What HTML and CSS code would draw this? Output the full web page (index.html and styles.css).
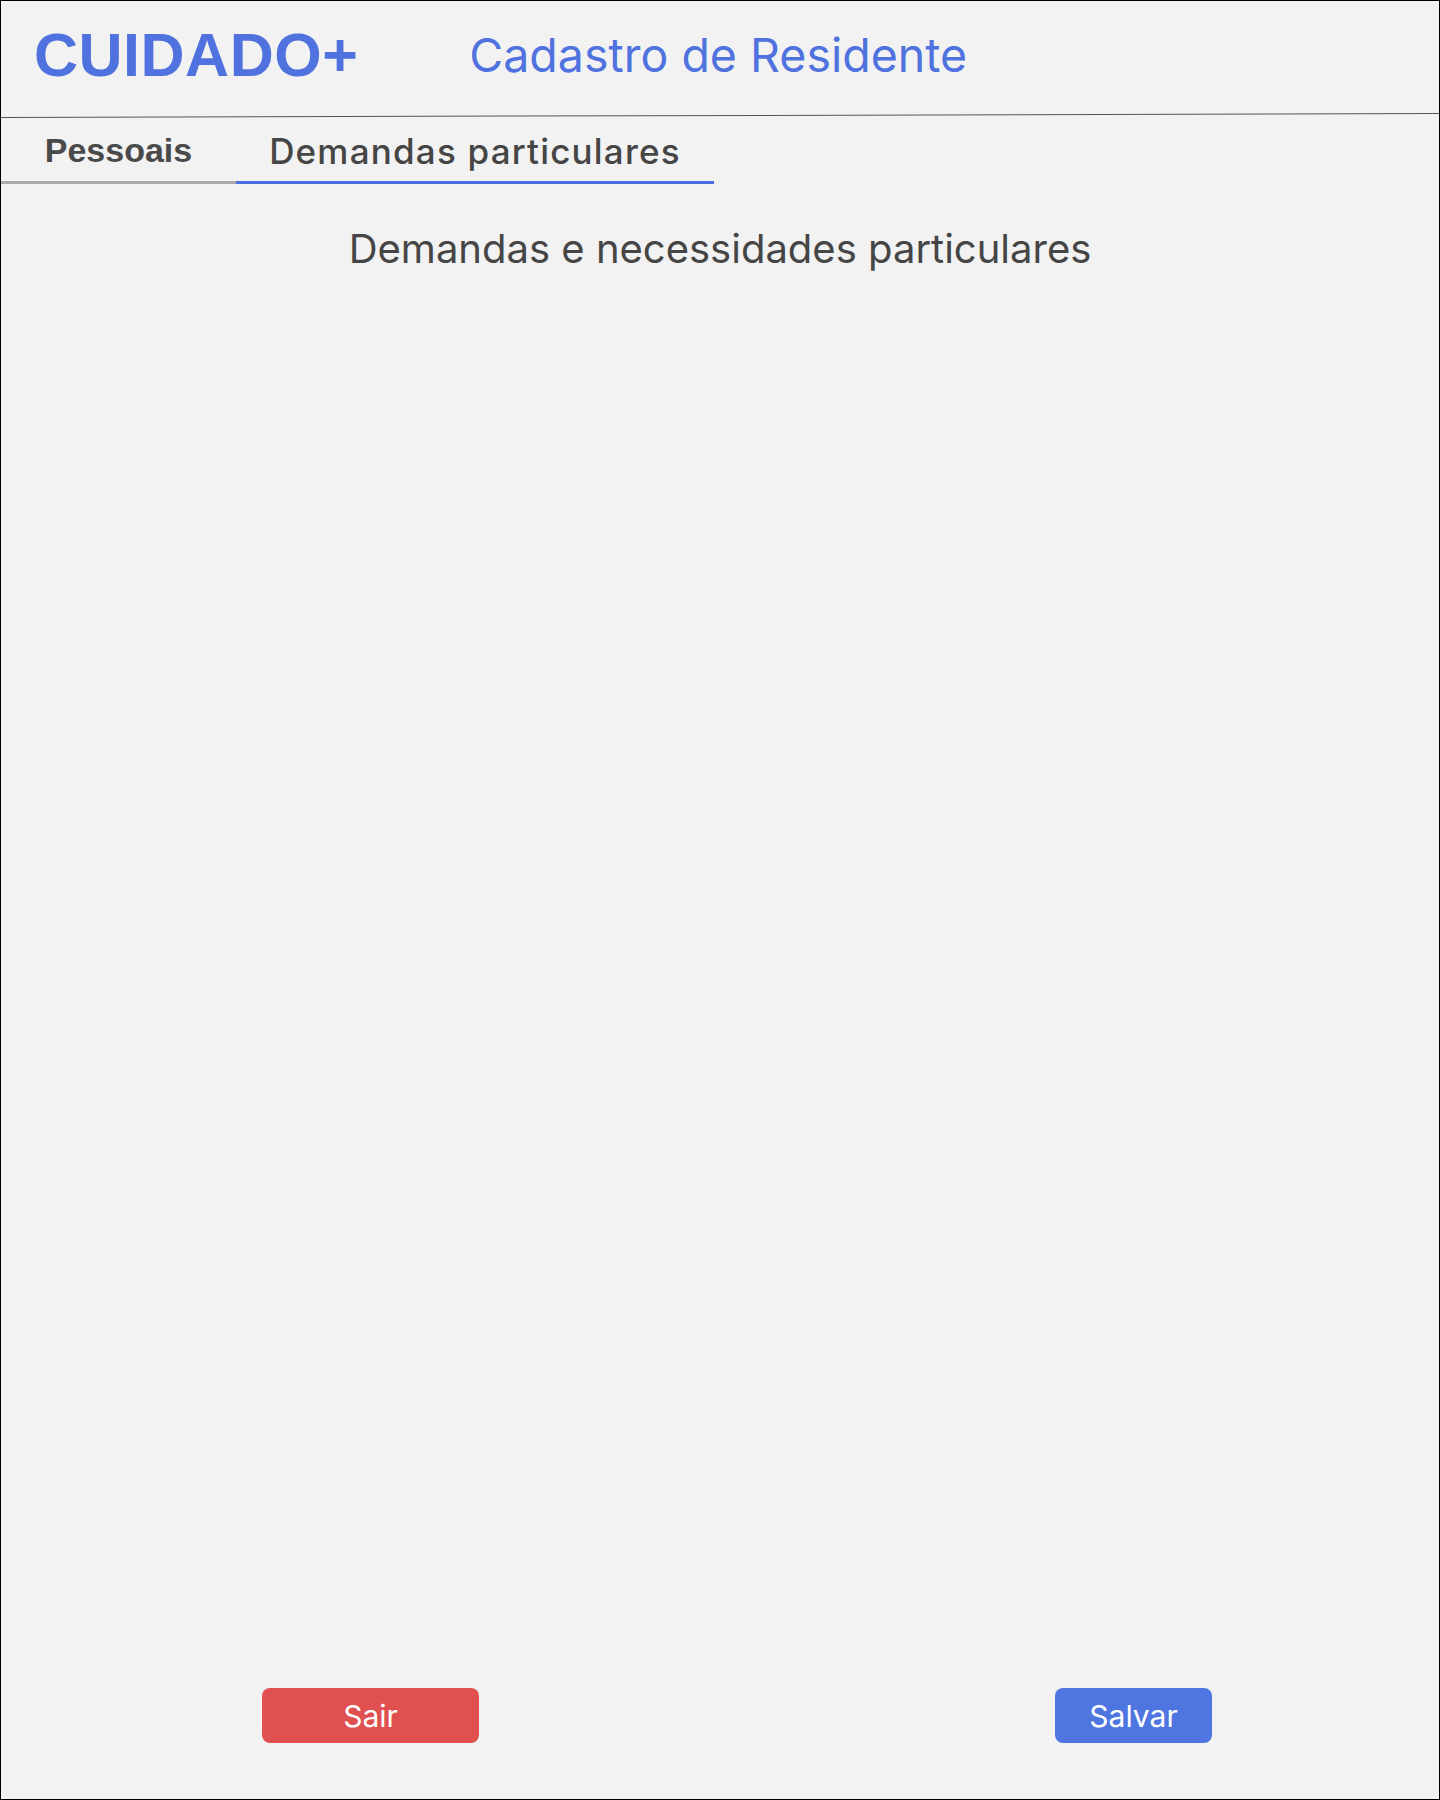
FILE: index.html
```html
<!DOCTYPE html>
<html lang="pt-BR">
<head>
<meta charset="utf-8">
<title>Cadastro de Residente</title>
<link rel="stylesheet" href="styles.css">
</head>
<body>
<div class="frame">
  <header class="header">
    <div class="logo">CUIDADO+</div>
    <h1 class="title">Cadastro de Residente</h1>
  </header>
  <div class="divider"></div>
  <nav class="tabs">
    <div class="tab tab-pessoais">Pessoais</div>
    <div class="tab tab-demandas active">Demandas particulares</div>
  </nav>
  <main class="content">
    <h2 class="section-title">Demandas e necessidades particulares</h2>
  </main>
  <footer class="actions">
    <button class="btn btn-sair">Sair</button>
    <button class="btn btn-salvar">Salvar</button>
  </footer>
</div>
</body>
</html>
```
FILE: styles.css
```css
html, body {
  margin: 0;
  padding: 0;
  background: #f2f2f2;
}
.frame {
  box-sizing: border-box;
  width: 1440px;
  height: 1800px;
  border: 1px solid #000;
  background: #f2f2f2;
  display: flex;
  flex-direction: column;
  font-family: "Inter", "Liberation Sans", sans-serif;
}
.header {
  box-sizing: border-box;
  height: 114px;
  display: flex;
  align-items: center;
  padding-left: 33px;
  padding-bottom: 6px;
  gap: 111px;
}
.logo {
  font-family: "Liberation Sans", Arial, sans-serif;
  font-weight: bold;
  font-size: 61px;
  color: #4f72df;
  letter-spacing: 0.5px;
}
.title {
  margin: 0;
  font-weight: 400;
  font-size: 46.5px;
  color: #4f72df;
}
.divider {
  height: 1px;
  background: #555;
  transform: rotate(-0.16deg);
}
.tabs {
  display: flex;
  height: 68px;
}
.tab {
  box-sizing: border-box;
  display: flex;
  align-items: center;
  justify-content: center;
  border-bottom: 3px solid #aaaaaa;
  color: #454545;
  padding-top: 4px;
}
.tab-pessoais {
  width: 235px;
  font-family: "Liberation Sans", Arial, sans-serif;
  font-weight: bold;
  font-size: 34px;
  color: #4a4a4a;
}
.tab-demandas {
  width: 478px;
  font-size: 35px;
  font-weight: 500;
  letter-spacing: 1.2px;
}
.tab.active {
  border-bottom-color: #4a6fe0;
}
.content {
  flex: 1;
  display: flex;
  flex-direction: column;
  align-items: center;
  padding-top: 40px;
}
.section-title {
  margin: 0;
  font-weight: 400;
  font-size: 40px;
  color: #454545;
}
.actions {
  display: flex;
  justify-content: space-between;
  padding: 0 227px 56px 261px;
}
.btn {
  height: 55px;
  border: none;
  border-radius: 8px;
  color: #fff;
  font-family: "Inter", "Liberation Sans", sans-serif;
  font-size: 30px;
  cursor: pointer;
}
.btn-sair {
  width: 217px;
  background: #e05050;
}
.btn-salvar {
  width: 157px;
  background: #4f75e0;
}
```
